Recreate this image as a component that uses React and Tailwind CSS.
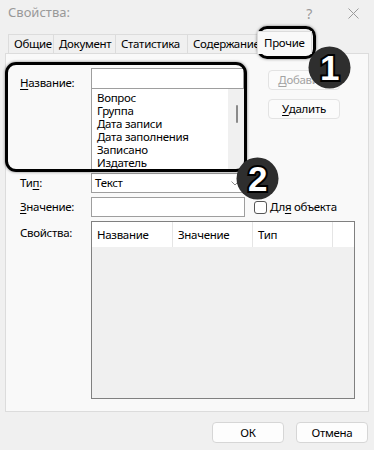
import React from "react";

const TABS = [
  { t: "Общие", w: "w-[46px]" },
  { t: "Документ", w: "w-[63px]" },
  { t: "Статистика", w: "w-[73px]" },
  { t: "Содержание", w: "w-[72px]" },
];
const NAMES = ["Вопрос", "Группа", "Дата записи", "Дата заполнения", "Записано", "Издатель"];

function Badge({ n, className }) {
  return (
    <div className={`absolute w-[43px] h-[43px] ${className}`}>
      <svg width="43" height="43" viewBox="0 0 43 43">
        <circle cx="21.5" cy="21.5" r="21" fill="#2e2e2e" />
        <text
          x="21.5"
          y="34"
          textAnchor="middle"
          fontFamily="Liberation Sans, Arial, sans-serif"
          fontWeight="700"
          fontSize="35"
          fill="#ffffff"
          stroke="#000000"
          strokeWidth="4"
          paintOrder="stroke"
        >
          {n}
        </text>
      </svg>
    </div>
  );
}

function Btn({ children, disabled }) {
  return (
    <div
      className={`h-[20px] w-[72px] rounded-[4px] border border-[#e3e3e3] bg-[#fbfbfb] flex items-center justify-center ${
        disabled ? "text-[#a3a3a3]" : "text-black"
      }`}
    >
      {children}
    </div>
  );
}

export default function App() {
  return (
    <div
      className="relative w-[374px] h-[450px] bg-[#f0f0f0] text-[11.5px] tracking-[-0.3px] text-black overflow-hidden"
      style={{ fontFamily: '"Noto Sans", "Open Sans", sans-serif' }}
    >
      {/* title bar */}
      <div className="h-[26px] flex items-center pl-[8px] pr-[15px]">
        <span className="text-[13px] tracking-normal text-[#999999] flex-1">Свойства:</span>
        <span className="text-[14px] text-[#9a9a9a] mr-[36px]">?</span>
        <svg width="11" height="11" viewBox="0 0 11 11">
          <path d="M0.5 0.5 L10.5 10.5 M10.5 0.5 L0.5 10.5" stroke="#9a9a9a" strokeWidth="1" />
        </svg>
      </div>

      {/* tabs */}
      <div className="mt-[4px] h-[23px] flex items-end pl-[8px]">
        {TABS.map(({ t, w }) => (
          <div
            key={t}
            className={`${w} h-[19px] pl-[5px] border border-b-0 border-[#dcdcdc] -ml-px first:ml-0 bg-[#f0f0f0] flex items-center leading-none whitespace-nowrap overflow-hidden`}
          >
            {t}
          </div>
        ))}
        <div className="h-[23px] w-[55px] pl-[6px] border border-b-0 border-[#dcdcdc] -ml-[2px] bg-[#f9f9f9] flex items-center leading-none relative z-10 mb-[-1px] whitespace-nowrap">
          Прочие
        </div>
      </div>

      {/* panel */}
      <div className="mx-[5px] h-[359px] border border-[#dcdcdc] bg-[#f9f9f9] pt-[14px] pl-[14px]">
        {/* name row */}
        <div className="flex">
          <div className="w-[71px] pt-[6px]">
            <span className="underline underline-offset-2">Н</span>азвание:
          </div>
          <div className="w-[153px]">
            <div className="h-[21px] border border-[#9e9e9e] bg-white" />
            <div className="h-[81px] border-l border-[#9e9e9e] bg-white flex">
              <div className="flex-1 pl-[5px] pt-[2px] leading-[13px]">
                {NAMES.map((n) => (
                  <div key={n}>{n}</div>
                ))}
              </div>
              <div className="w-[16px] bg-[#f0f0f0] flex justify-center pt-[16px]">
                <div className="w-[2px] h-[18px] bg-[#8a8a8a] rounded-full ml-[1px]" />
              </div>
            </div>
          </div>
          <div className="ml-[24px] pt-[2px] flex flex-col gap-[9px]">
            <Btn disabled>
              <span className="underline underline-offset-2">Д</span>обавить
            </Btn>
            <Btn>
              <span className="underline underline-offset-2">У</span>далить
            </Btn>
          </div>
        </div>

        {/* type row */}
        <div className="flex items-center mt-[3px] h-[20px]">
          <div className="w-[71px]">
            Ти<span className="underline underline-offset-2">п</span>:
          </div>
          <div className="w-[153px] h-[20px] border border-[#9e9e9e] bg-white flex items-center pl-[3px] pr-[4px]">
            <span className="flex-1">Текст</span>
            <svg width="8" height="5" viewBox="0 0 8 5">
              <path d="M0.5 0.5 L4 4 L7.5 0.5" stroke="#8a8a8a" fill="none" strokeWidth="1" />
            </svg>
          </div>
        </div>

        {/* value row */}
        <div className="flex items-center mt-[4px] h-[20px]">
          <div className="w-[71px]">
            <span className="underline underline-offset-2">З</span>начение:
          </div>
          <div className="w-[154px] h-[20px] border border-[#9e9e9e] bg-white" />
          <div className="ml-[9px] w-[13px] h-[13px] rounded-[3px] border border-[#555555] bg-white" />
          <div className="ml-[3px]">
            Дл<span className="underline underline-offset-2">я</span> объекта
          </div>
        </div>

        {/* properties */}
        <div className="flex mt-[4px]">
          <div className="w-[71px] pt-[3px]">Свойства:</div>
          <div className="w-[264px] h-[178px] border border-[#808080] bg-[#f0f0f0]">
            <div className="h-[25px] flex bg-white">
              <div className="w-[81px] border-r border-[#e5e5e5] flex items-center pl-[5px]">Название</div>
              <div className="w-[80px] border-r border-[#e5e5e5] flex items-center pl-[5px]">Значение</div>
              <div className="w-[80px] border-r border-[#e5e5e5] flex items-center pl-[5px]">Тип</div>
              <div className="flex-1" />
            </div>
          </div>
        </div>
      </div>

      {/* bottom buttons */}
      <div className="flex justify-end gap-[12px] pr-[6px] mt-[10px]">
        <div className="h-[21px] w-[72px] rounded-[4px] border border-[#d6d6d6] bg-[#fdfdfd] flex items-center justify-center">
          ОК
        </div>
        <div className="h-[21px] w-[72px] rounded-[4px] border border-[#d6d6d6] bg-[#fdfdfd] flex items-center justify-center">
          Отмена
        </div>
      </div>

      {/* annotations */}
      <div className="absolute left-[257px] top-[26px] w-[59px] h-[33px] rounded-[10px] border-[3px] border-black shadow-[0_0_3px_rgba(0,0,0,0.5)]" />
      <div className="absolute left-[5px] top-[62px] w-[242px] h-[110px] rounded-[11px] border-[3px] border-black shadow-[0_0_3px_rgba(0,0,0,0.5)]" />
      <Badge n="1" className="left-[308px] top-[46px]" />
      <Badge n="2" className="left-[236px] top-[157px]" />
    </div>
  );
}
